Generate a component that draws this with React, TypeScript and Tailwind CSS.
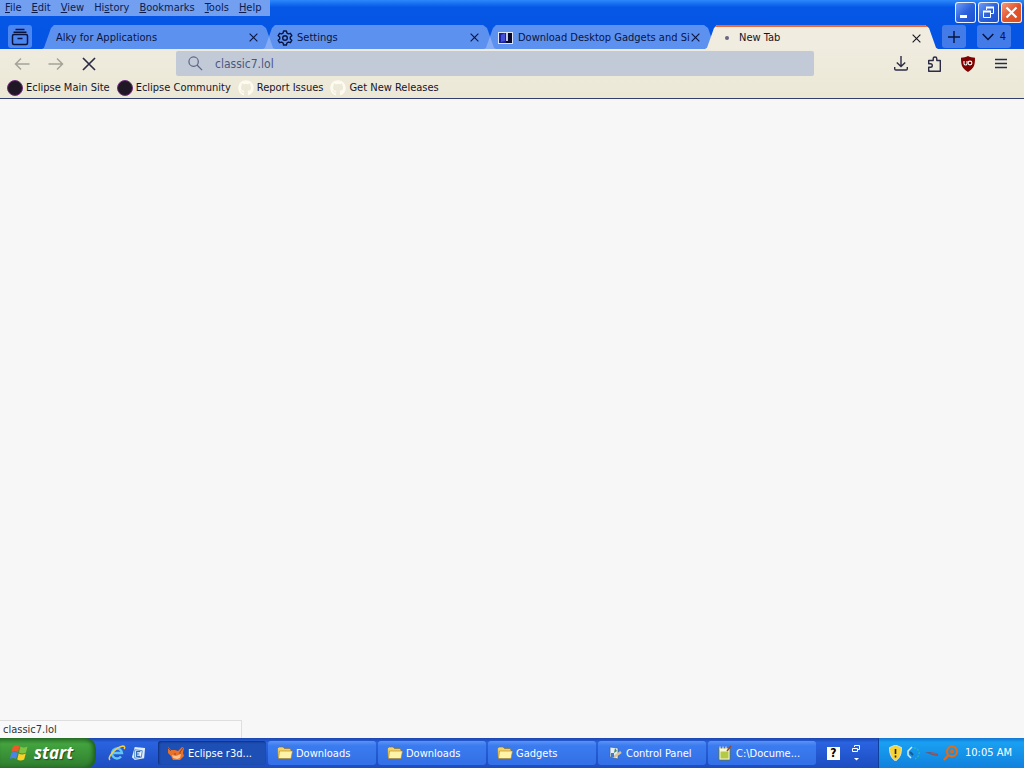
import type { ReactNode } from "react";
import { FaGithub } from "react-icons/fa";

const MENUS = ["File", "Edit", "View", "History", "Bookmarks", "Tools", "Help"];

function CloseIcon({ className = "size-[9px]" }: { className?: string }) {
  return (
    <svg viewBox="0 0 10 10" className={className} fill="none" stroke="currentColor" strokeWidth="1.2">
      <path d="M.7.7l8.6 8.6M9.3.7L.7 9.3" />
    </svg>
  );
}

function MenuBar() {
  return (
    <nav aria-label="Menu" className="flex h-4 items-center self-start bg-[#739ff0] pr-1 text-[#0c1c4e]">
      {MENUS.map((menu) => {
        const key = menu === "History" ? 2 : 0;
        return (
          <button key={menu} type="button" className="px-[5px] leading-4">
            {menu.slice(0, key)}
            <span className="underline">{menu[key]}</span>
            {menu.slice(key + 1)}
          </button>
        );
      })}
    </nav>
  );
}

function WindowButtons() {
  const base =
    "flex size-[21px] items-center justify-center rounded-[3px] border border-white/90 text-white bg-linear-to-br";
  return (
    <div className="flex gap-[2px] pt-[2px] pr-[2px]">
      <button type="button" aria-label="Minimize" className={`${base} from-[#6f9cf5] via-[#2c62dd] to-[#1c4fcf]`}>
        <svg viewBox="0 0 19 19" className="size-[19px]">
          <path d="M4 12h7v3H4z" fill="currentColor" />
        </svg>
      </button>
      <button type="button" aria-label="Restore" className={`${base} from-[#6f9cf5] via-[#2c62dd] to-[#1c4fcf]`}>
        <svg viewBox="0 0 19 19" className="size-[19px]" fill="none" stroke="currentColor">
          <path d="M7.500 7V4.500h7v6H12" />
          <path d="M7 4.500h8" strokeWidth="2" />
          <path d="M4.500 8.500h7v6h-7z" />
          <path d="M4 8.500h8" strokeWidth="2" />
        </svg>
      </button>
      <button type="button" aria-label="Close" className={`${base} from-[#f0997a] via-[#e2552c] to-[#d9501f]`}>
        <svg viewBox="0 0 19 19" className="size-[19px]" stroke="currentColor" strokeWidth="2.200">
          <path d="M4.500 4.500l10 10M14.500 4.500l-10 10" />
        </svg>
      </button>
    </div>
  );
}

function GearIcon() {
  return (
    <svg viewBox="0 0 16 16" className="size-4" fill="none" stroke="currentColor" strokeWidth="1.400" strokeLinejoin="round">
      <path d="M6.600 1h2.800l.5 2 1.500.9 2-.6 1.400 2.400-1.500 1.400v1.800l1.500 1.400-1.400 2.400-2-.6-1.500.9-.5 2H6.600l-.5-2-1.500-.9-2 .6-1.400-2.400 1.500-1.400V7.100L1.200 5.700l1.400-2.400 2 .6L6.100 3z" />
      <circle cx="8" cy="8" r="2.300" />
    </svg>
  );
}

function GadgetIcon() {
  return (
    <svg viewBox="0 0 16 16" className="size-4">
      <path d="M0 2h15v12H0z" fill="#dce5f5" />
      <path d="M1 3h13v10H1z" fill="#08082c" />
      <path d="M1 3h7v10H1z" fill="#1c1f9c" />
      <path d="M3 5l4-2v8l-4 1z" fill="#4350d8" />
      <path d="M8 3h2v8H8z" fill="#c4c9ea" />
    </svg>
  );
}

type TabProps = { title: string; icon?: ReactNode; active?: boolean };

function Tab({ title, icon, active }: TabProps) {
  return (
    <div
      className={`-mr-3 flex h-6 w-[233px] min-w-0 items-center pr-[17px] pl-[14px] [clip-path:polygon(0_100%,2px_95%,9px_12%,12px_0,calc(100%-13px)_0,calc(100%-9px)_12%,calc(100%-2px)_95%,100%_100%)] ${
        active
          ? "border-t-2 border-[#e8693c] bg-[#f0ecdf] text-[#14141f]"
          : "bg-[#a6c3fa]/55 pt-px text-[#081440]"
      }`}
    >
      {icon && <span className="mr-1 flex size-4 shrink-0 items-center justify-center">{icon}</span>}
      <button type="button" className="min-w-0 flex-1 overflow-hidden text-left leading-4 whitespace-nowrap">
        {title}
      </button>
      <button type="button" aria-label={`Close ${title}`} className="shrink-0">
        <CloseIcon />
      </button>
    </div>
  );
}

function TabStrip() {
  return (
    <div className="flex h-6 items-start pl-2 text-[#081440]">
      <button type="button" aria-label="Recent browsing" className="mr-[10px] flex h-[23px] w-6 shrink-0 items-center justify-center rounded-[3px] bg-[#4c86f0]">
        <svg viewBox="0 0 18 18" className="size-[18px]" fill="none" stroke="currentColor" strokeWidth="1.500">
          <path d="M4.500 1.500h9M2.500 4.200h13" />
          <rect x="1.500" y="6.500" width="15" height="10" rx="1.500" />
          <path d="M6.500 10.500h5" />
        </svg>
      </button>
      <Tab title="Alky for Applications" />
      <Tab title="Settings" icon={<GearIcon />} />
      <Tab title="Download Desktop Gadgets and Si" icon={<GadgetIcon />} />
      <Tab title="New Tab" icon={<span className="size-1 rounded-full bg-[#686680]" />} active />
      <button type="button" aria-label="New tab" className="ml-4 flex h-[23px] w-6 shrink-0 items-center justify-center rounded-[3px] bg-[#437ce8]">
        <svg viewBox="0 0 12 12" className="size-3" stroke="currentColor" strokeWidth="1.400">
          <path d="M6 0v12M0 6h12" />
        </svg>
      </button>
      <button type="button" aria-label="List all tabs" className="ml-[11px] flex h-[23px] w-[34px] shrink-0 items-center justify-center gap-[6px] rounded-[3px] bg-[#437ce8] pt-px">
        <svg viewBox="0 0 12 8" className="h-2 w-3" fill="none" stroke="currentColor" strokeWidth="1.500">
          <path d="M.7 1L6 6.500 11.300 1" />
        </svg>
        <span className="leading-4">4</span>
      </button>
    </div>
  );
}

function Arrow({ flip }: { flip?: boolean }) {
  return (
    <svg viewBox="0 0 16 14" className={`h-[14px] w-4 ${flip ? "rotate-180" : ""}`} fill="none" stroke="currentColor" strokeWidth="1.500">
      <path d="M15.500 7H1.500M7 1.500L1.500 7 7 12.500" />
    </svg>
  );
}

function NavBar() {
  return (
    <div className="flex h-[29px] items-center pr-4 pl-[14px] text-[#2b2b46]">
      <div className="flex items-center gap-[18px]">
        <button type="button" aria-label="Back" className="text-[#a5a398]">
          <Arrow />
        </button>
        <button type="button" aria-label="Forward" className="text-[#a5a398]">
          <Arrow flip />
        </button>
        <button type="button" aria-label="Stop">
          <CloseIcon className="size-[14px]" />
        </button>
      </div>
      <label className="mr-[79px] ml-20 flex h-[25px] min-w-0 flex-1 items-center rounded-[2px] bg-[#c2cad7] pl-3 text-[#5a6484]">
        <svg viewBox="0 0 16 16" className="size-[15px] shrink-0" fill="none" stroke="currentColor" strokeWidth="1.300">
          <circle cx="6" cy="6" r="5" />
          <path d="M9.600 9.600l5.400 5.400" />
        </svg>
        <input
          aria-label="Address"
          defaultValue="classic7.lol"
          className="ml-3 min-w-0 flex-1 bg-transparent pt-px text-[12px] text-[#4b5780] outline-none"
        />
      </label>
      <div className="flex items-center gap-[18px]">
        <button type="button" aria-label="Downloads">
          <svg viewBox="0 0 16 16" className="size-4" fill="none" stroke="currentColor" strokeWidth="1.400">
            <path d="M8 0v10.500M3.800 6.500L8 10.500l4.200-4M1.700 11v1.800c0 .7.500 1.200 1.200 1.200h10.200c.7 0 1.200-.5 1.200-1.200V11" />
          </svg>
        </button>
        <button type="button" aria-label="Extensions">
          <svg viewBox="0 0 16 16" className="size-4" fill="none" stroke="currentColor" strokeWidth="1.400" strokeLinejoin="round">
            <path d="M1.700 5.500v-1h4.500V2.800a1.800 1.800 0 0 1 3.600 0v1.700h3.500v10.800H1.700v-4h1.800a1.700 1.700 0 0 0 0-3.600H1.700z" />
          </svg>
        </button>
        <button type="button" aria-label="uBlock Origin" className="-ml-px">
          <svg viewBox="0 0 16 16" className="size-4">
            <path d="M8 0c2 1.200 4.500 1.700 7 1.700 0 6.800-.5 10.300-7 14.300C1.500 12 1 8.500 1 1.700 3.500 1.700 6 1.200 8 0z" fill="#800000" />
            <path d="M4 5v2.500a1.500 1.500 0 0 0 3 0V5" fill="none" stroke="#fff" strokeWidth="1.100" />
            <circle cx="10" cy="7" r="1.900" fill="none" stroke="#fff" strokeWidth="1.100" />
          </svg>
        </button>
        <button type="button" aria-label="Application menu">
          <svg viewBox="0 0 14 12" className="h-3 w-[14px]" stroke="currentColor" strokeWidth="1.300">
            <path d="M1 1.500h12M1 5.500h12M1 9.500h12" />
          </svg>
        </button>
      </div>
    </div>
  );
}

const BOOKMARKS = [
  { name: "Eclipse Main Site", github: false },
  { name: "Eclipse Community", github: false },
  { name: "Report Issues", github: true },
  { name: "Get New Releases", github: true },
];

function BookmarksBar() {
  return (
    <div className="flex h-5 items-center gap-[7px] pl-[7px] text-[#15152c]">
      {BOOKMARKS.map((bookmark) => (
        <a key={bookmark.name} href="#" className="flex items-center gap-[3px] leading-4 whitespace-nowrap">
          {bookmark.github ? (
            <FaGithub className="size-4 text-[#fdfaf0]" />
          ) : (
            <span className="size-4 rounded-full border border-[#70307f] bg-[#201725]" />
          )}
          {bookmark.name}
        </a>
      ))}
    </div>
  );
}

function FolderIcon() {
  return (
    <svg viewBox="0 0 16 16" className="size-4 shrink-0">
      <path d="M.5 3.500L2 2h4l1.500 1.500H13l1 1.500v8H1z" fill="#f2d266" stroke="#8d6a1c" strokeWidth=".6" />
      <path d="M2.500 6h13L14 13.500H1.500z" fill="#fff3a8" stroke="#a8832b" strokeWidth=".6" />
    </svg>
  );
}

function FoxIcon() {
  return (
    <svg viewBox="0 0 18 16" className="h-4 w-[18px] shrink-0">
      <path d="M1 2l3 3h4l3 1 4-4 2 1-1 5 1 3-4 4H6l-2-4-3-3z" fill="#e8722b" />
      <path d="M5 10l4 1 5-2-1 4-3 1-4-1z" fill="#ffc28a" />
      <path d="M1 3l3 3M16 3l-3 4M7 9h2M12 8h2" stroke="#8d452a" />
    </svg>
  );
}

function ControlPanelIcon() {
  return (
    <svg viewBox="0 0 16 16" className="size-4 shrink-0">
      <path d="M3 2l8 1v11l-8-2z" fill="#e4edf8" stroke="#40618c" strokeWidth=".7" />
      <path d="M8 3l2 3-3 2z" fill="#3b8a5a" />
      <path d="M7 12l7-5" stroke="#d9c49a" strokeWidth="2.500" />
      <path d="M4 8h3v4H4z" fill="#4576c9" />
    </svg>
  );
}

function NotepadIcon() {
  return (
    <svg viewBox="0 0 16 16" className="size-4 shrink-0">
      <path d="M2 3h11v12H2z" fill="#f6f7d8" stroke="#68751d" strokeWidth=".8" />
      <path d="M3.500 6.500h8v7h-8z" fill="#b4c944" />
      <path d="M3 1.500v3M6 1.500v3M9 1.500v3" stroke="#f7f7f7" />
      <path d="M10 6l4-5" stroke="#9a4a2c" strokeWidth="1.500" />
    </svg>
  );
}

const TASKS = [
  { label: "Eclipse r3d...", icon: <FoxIcon />, active: true },
  { label: "Downloads", icon: <FolderIcon /> },
  { label: "Downloads", icon: <FolderIcon /> },
  { label: "Gadgets", icon: <FolderIcon /> },
  { label: "Control Panel", icon: <ControlPanelIcon /> },
  { label: "C:\\Docume...", icon: <NotepadIcon /> },
];

function StartButton() {
  return (
    <button
      type="button"
      className="flex h-full w-24 shrink-0 items-center gap-1 rounded-r-[10px] bg-linear-to-b from-[#2f7a2d] via-[#43a33f] via-20% to-[#2f7d2e] pl-[10px] font-['Open_Sans',sans-serif] text-[17px] font-bold text-white italic shadow-[inset_-3px_0_4px_#1d5d20] [text-shadow:1px_1px_1px_#1c4d1d]"
    >
      <svg viewBox="0 0 20 18" className="h-[18px] w-5">
        <path d="M3 2q3-2 6.500 0L8 8Q5 6 1.500 8z" fill="#ec5a27" />
        <path d="M10.500 2.500q3 2 7 0L16 8.500q-4 2-7 0z" fill="#80c341" />
        <path d="M1.200 9q3-2 6.500 0L6 15Q3 13 0 15z" fill="#4b83ea" />
        <path d="M8.700 9.500q3 2 7 0l-1.500 6q-4 2-7 0z" fill="#fbd127" />
      </svg>
      start
    </button>
  );
}

function QuickLaunch() {
  return (
    <div className="flex w-[62px] shrink-0 items-center gap-[5px] pl-3">
      <button type="button" aria-label="Internet Explorer">
        <svg viewBox="0 0 18 16" className="h-4 w-[18px]" fill="none">
          <path d="M13 11.500a5 5 0 1 1 1-3.500H5" stroke="#62c5f4" strokeWidth="2.400" />
          <path d="M2 15C-1 12 8 2 15 1c2 0 2 2 1 3" stroke="#f4cf45" strokeWidth="1.500" />
        </svg>
      </button>
      <button type="button" aria-label="Outlook Express">
        <svg viewBox="0 0 16 16" className="size-[15px]">
          <path d="M4 1l11 1-1 11-10 2-3-3z" fill="#dcecfb" />
          <path d="M4 4l8 1-1 7-7 1z" fill="#f9fcff" stroke="#4b83c4" />
          <path d="M10 6H6v5h4M6 8.500h3" fill="none" stroke="#2b65b5" strokeWidth="1.200" />
        </svg>
      </button>
    </div>
  );
}

function Tray() {
  return (
    <div className="flex h-full w-[146px] shrink-0 items-center border-l border-[#0d3f9d] bg-linear-to-b from-[#1277d5] via-[#19a0f2] via-15% to-[#1181dd] pl-[9px] text-white">
      <svg viewBox="0 0 16 16" className="size-4" aria-label="Security alert">
        <path d="M7.500 0l6 2.500c0 6-1 10-6 13.500-5-3.500-6-7.500-6-13.500z" fill="#f7d336" stroke="#e9eef5" strokeWidth=".8" />
        <path d="M7.500 4v5M7.500 10.500v2" stroke="#222" strokeWidth="1.600" />
      </svg>
      <svg viewBox="0 0 16 16" className="ml-[2px] size-4" fill="none">
        <path d="M6 2L2 6v4l3 3" stroke="#d2edff" strokeWidth="1.500" />
        <path d="M8 3q4 0 5 4t-4 7" stroke="#2bb8b0" strokeWidth="1.300" strokeDasharray="2 1.500" />
        <path d="M4 7l3 3" stroke="#1d578f" strokeWidth="2" />
      </svg>
      <svg viewBox="0 0 16 16" className="ml-[2px] size-4">
        <path d="M1 7h5l8 2v2l-6-1z" fill="#655d78" />
        <path d="M7 8l6 1" stroke="#c44b39" strokeWidth="1.300" />
      </svg>
      <svg viewBox="0 0 18 16" className="ml-[2px] h-4 w-[18px]" fill="none" stroke="#d96d20">
        <circle cx="10" cy="6.500" r="5" strokeWidth="2.300" />
        <circle cx="10" cy="6.500" r="1.200" strokeWidth="1.500" />
        <path d="M6.500 10L2 15" strokeWidth="2.500" />
      </svg>
      <time className="ml-[5px] pt-px whitespace-nowrap">10:05 AM</time>
    </div>
  );
}

function Taskbar() {
  return (
    <footer className="flex h-[30px] shrink-0 items-center bg-linear-to-b from-[#1a45ad] via-[#2a63e0] via-15% to-[#1d4cc0]">
      <StartButton />
      <QuickLaunch />
      <div className="flex min-w-0 flex-1 gap-[2px]">
        {TASKS.map((task, i) => (
          <button
            key={i}
            type="button"
            className={`flex h-6 max-w-[108px] min-w-0 flex-1 items-center gap-[3px] rounded-[3px] pl-[9px] whitespace-nowrap text-white ${
              task.active
                ? "bg-[#1e4fb4] shadow-[inset_1px_1px_2px_#0f2f7c]"
                : "bg-linear-to-b from-[#5a93f5] via-[#3b7bf0] via-20% to-[#336fe6]"
            }`}
          >
            {task.icon}
            <span className="pt-px leading-4">{task.label}</span>
          </button>
        ))}
      </div>
      <div className="flex w-[62px] shrink-0 items-center gap-[11px] pl-[11px] text-white">
        <button type="button" aria-label="Help" className="flex size-[13px] items-center justify-center bg-[#fffef0] text-[12px] font-bold text-black">
          ?
        </button>
        <button type="button" aria-label="Language bar options">
          <svg viewBox="0 0 10 18" className="h-[18px] w-[10px]" fill="none" stroke="currentColor">
            <path d="M3.500 3V1.500h5v4H7M1.500 4.500h5v3h-5z" />
            <path d="M3 14h5l-2.500 2.500z" fill="currentColor" stroke="none" />
          </svg>
        </button>
      </div>
      <Tray />
    </footer>
  );
}

export default function App() {
  return (
    <div className="flex h-screen flex-col overflow-hidden bg-[#f7f7f7] font-['DejaVu_Sans_Condensed','DejaVu_Sans',sans-serif] text-[11px]">
      <header className="shrink-0">
        <div className="bg-linear-to-b from-[#2c88fb] via-[#0557e6] via-15% to-[#0554e4]">
          <div className="flex h-[25px] items-start justify-between">
            <MenuBar />
            <WindowButtons />
          </div>
          <TabStrip />
        </div>
        <div className="border-b border-[#303f70] bg-linear-to-b from-[#efecdf] to-[#ebe8d6]">
          <NavBar />
          <BookmarksBar />
        </div>
      </header>
      <main className="relative min-h-0 flex-1">
        <p className="absolute bottom-0 left-0 h-[18px] w-[242px] border-t border-r border-[#dedede] bg-[#f9f9f9] pl-[3px] leading-[18px] text-[#333]">
          classic7.lol
        </p>
      </main>
      <Taskbar />
    </div>
  );
}
